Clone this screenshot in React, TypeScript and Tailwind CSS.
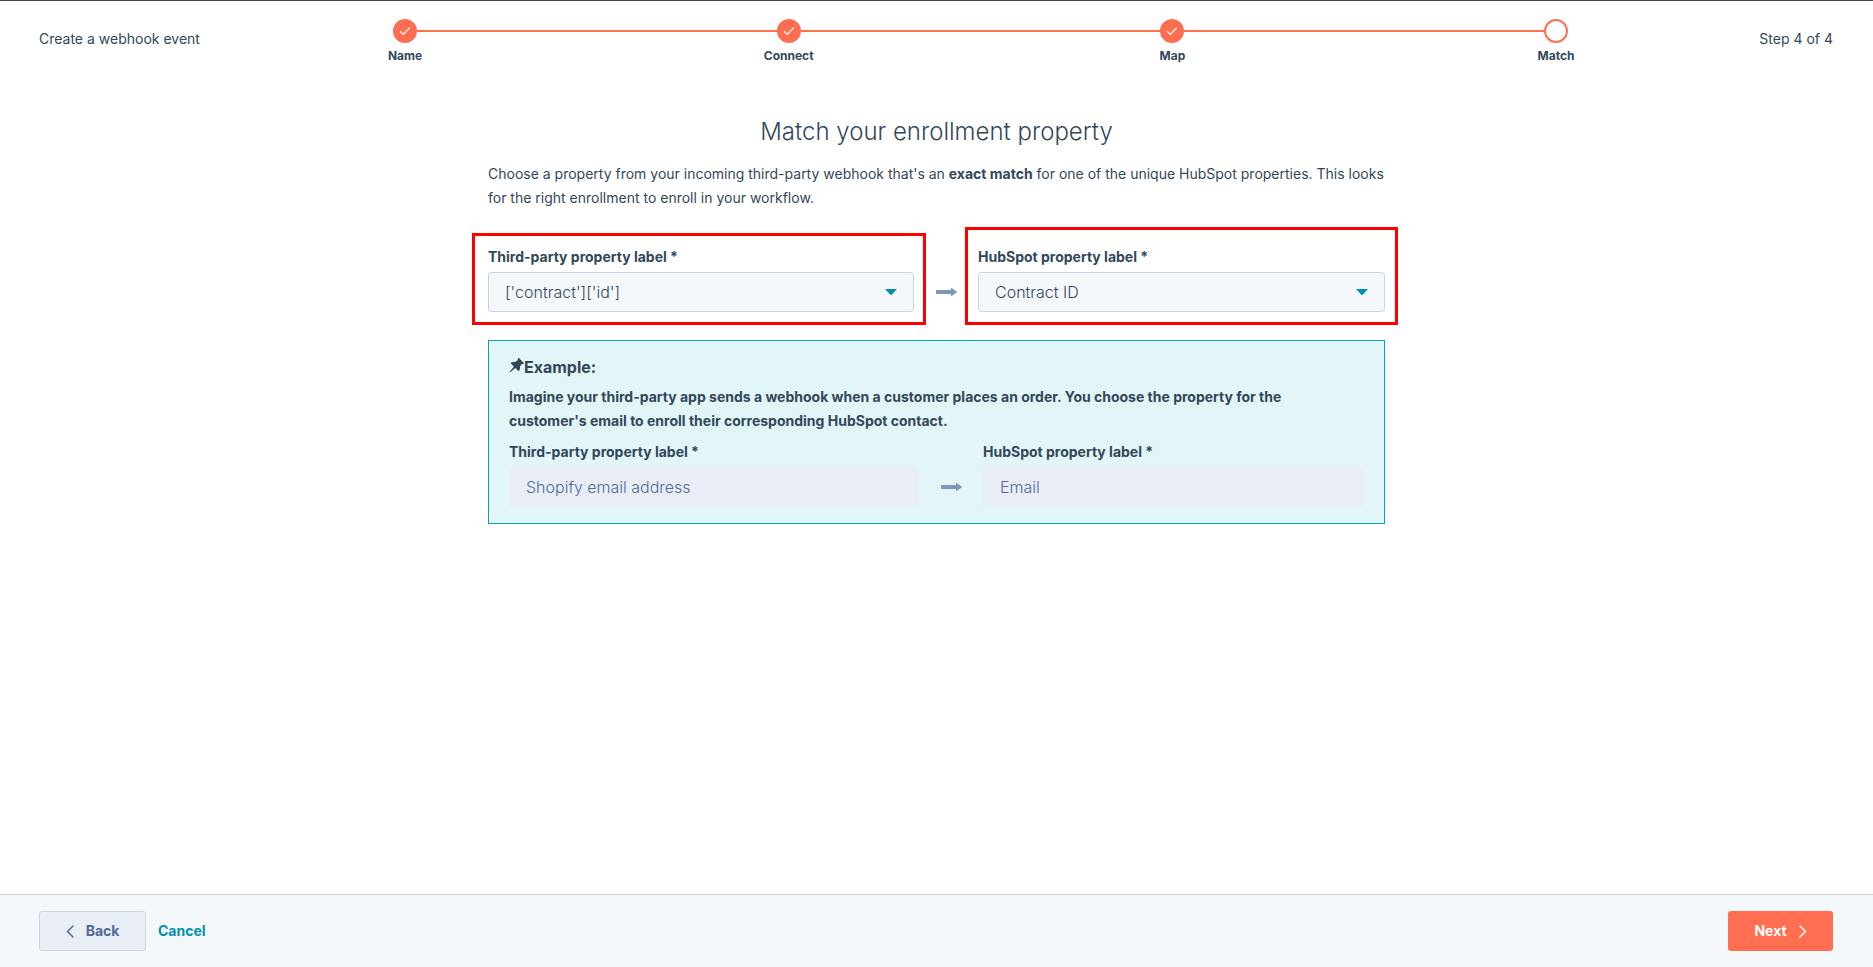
import { useState } from 'react';

const STEPS = ['Name', 'Connect', 'Map', 'Match'];
const CURRENT_STEP = 3;

const THIRD_PARTY_PROPERTIES = ["['contract']['id']"];
const HUBSPOT_PROPERTIES = ['Contract ID'];

function CheckIcon() {
  return (
    <svg width="12" height="10" viewBox="0 0 12 10" fill="none" aria-hidden="true">
      <path d="M1.2 5.2 4.4 8.4 10.8 1.6" stroke="currentColor" strokeWidth="1.3" />
    </svg>
  );
}

function ArrowIcon() {
  return (
    <svg width="21" height="8" viewBox="0 0 21 8" fill="currentColor" aria-hidden="true">
      <path d="M.6 2.1H15V.4c0-.4.3-.5.6-.3l5 3.4c.4.3.4.7 0 1l-5 3.4c-.3.2-.6.1-.6-.3V5.9H.6c-.4 0-.6-.2-.6-.6V2.7c0-.4.2-.6.6-.6Z" />
    </svg>
  );
}

function PinIcon() {
  return (
    <svg width="15" height="15" viewBox="0 0 15 15" fill="currentColor" aria-hidden="true">
      <path d="M9 .3c.3-.4.8-.4 1.2 0l4.4 4.4c.4.4.3.9-.1 1.1-.5.3-1 .3-1.5.2L10.9 8.5c.3 1.5.1 2.9-.6 4.1-.3.5-.8.5-1.2.1L6.3 9.9 1.3 14.3c-.4.3-.9-.1-.6-.6L4.9 8.5 2.1 5.7c-.4-.4-.3-.9.2-1.1 1.2-.6 2.5-.8 3.9-.5L8.9 2c-.2-.6-.2-1.2.1-1.7Z" />
    </svg>
  );
}

function Chevron({ direction }: { direction: 'left' | 'right' }) {
  return (
    <svg width="8" height="13" viewBox="0 0 8 13" fill="none" aria-hidden="true">
      <path
        d={direction === 'left' ? 'M7 1 1.5 6.5 7 12' : 'M1 1 6.5 6.5 1 12'}
        stroke="currentColor"
        strokeWidth="1.5"
        strokeLinecap="round"
        strokeLinejoin="round"
      />
    </svg>
  );
}

function Stepper() {
  return (
    <ol className="flex flex-1 justify-between">
      {STEPS.map((step, index) => (
        <li
          key={step}
          className={index === 0 ? 'flex' : 'flex flex-1'}
          aria-current={index === CURRENT_STEP ? 'step' : undefined}
        >
          {index > 0 && <span className="mt-[11px] h-[2px] flex-1 bg-[#ff6e50]" />}
          <div className="flex w-6 flex-col items-center">
            <span
              className={`flex size-6 items-center justify-center rounded-full border-2 border-[#ff6e50] text-white ${
                index < CURRENT_STEP ? 'bg-[#ff6e50]' : 'bg-white'
              }`}
            >
              {index < CURRENT_STEP && <CheckIcon />}
            </span>
            <span className="mt-[5px] text-xs leading-4 font-bold whitespace-nowrap">{step}</span>
          </div>
        </li>
      ))}
    </ol>
  );
}

type PropertySelectProps = {
  id: string;
  label: string;
  options: string[];
  value: string;
  onChange: (value: string) => void;
  highlight: string;
};

function PropertySelect({ id, label, options, value, onChange, highlight }: PropertySelectProps) {
  return (
    <div className="relative">
      <label htmlFor={id} className="block text-sm leading-6 font-bold">
        {label}
      </label>
      <div className="relative mt-[3px]">
        <select
          id={id}
          value={value}
          onChange={(e) => onChange(e.target.value)}
          className="h-10 w-full appearance-none rounded-[3px] border border-[#cbd6e2] bg-[#f5f8fa] px-4 text-base font-light text-[#33475b]"
        >
          {options.map((option) => (
            <option key={option}>{option}</option>
          ))}
        </select>
        <svg
          className="pointer-events-none absolute top-[17px] right-[17px] text-[#0091ae]"
          width="12"
          height="6"
          viewBox="0 0 12 6"
          fill="currentColor"
          aria-hidden="true"
        >
          <path d="M0 0h12L6.7 5.7c-.4.4-1 .4-1.4 0Z" />
        </svg>
      </div>
      <div className={`pointer-events-none absolute border-[3px] border-[#ff0000] ${highlight}`} />
    </div>
  );
}

function ExampleField({ id, label, value }: { id: string; label: string; value: string }) {
  return (
    <div>
      <label htmlFor={id} className="block text-sm leading-6 font-bold">
        {label}
      </label>
      <input
        id={id}
        type="text"
        value={value}
        disabled
        className="mt-[3px] block h-10 w-full rounded-[3px] bg-[#e9eef6] px-[17px] text-base font-light text-[#506a9a]"
      />
    </div>
  );
}

export default function App() {
  const [thirdParty, setThirdParty] = useState(THIRD_PARTY_PROPERTIES[0]);
  const [hubspot, setHubspot] = useState(HUBSPOT_PROPERTIES[0]);

  return (
    <div className="flex min-h-screen flex-col border-t border-[#3c4a46] bg-white font-[Inter,sans-serif] text-[#33475b]">
      {/* Header */}
      <header className="flex pt-[18px] pr-10 pl-[39px]">
        <p className="w-[354px] pt-2 text-sm leading-6">Create a webhook event</p>
        <Stepper />
        <p className="w-[265px] pt-2 text-right text-sm leading-6">Step 4 of 4</p>
      </header>

      {/* Content */}
      <main className="mx-auto w-full max-w-[897px] flex-1 pt-[52px]">
        <h1 className="text-center text-2xl leading-8 font-light">Match your enrollment property</h1>
        <p className="mt-[14px] text-sm leading-6">
          Choose a property from your incoming third-party webhook that's an{' '}
          <strong className="font-bold">exact match</strong> for one of the unique HubSpot properties. This looks for
          the right enrollment to enroll in your workflow.
        </p>

        <form className="mt-[35px] grid grid-cols-[426fr_64px_407fr]">
          <PropertySelect
            id="third-party-property"
            label="Third-party property label *"
            options={THIRD_PARTY_PROPERTIES}
            value={thirdParty}
            onChange={setThirdParty}
            highlight="-top-3 -right-3 -bottom-[13px] -left-4"
          />
          <div className="flex h-10 items-center justify-center self-end text-[#7c98b6]">
            <ArrowIcon />
          </div>
          <PropertySelect
            id="hubspot-property"
            label="HubSpot property label *"
            options={HUBSPOT_PROPERTIES}
            value={hubspot}
            onChange={setHubspot}
            highlight="-top-[18px] -right-[13px] -bottom-[13px] -left-[13px]"
          />
        </form>

        <section className="mt-7 border border-[#00a4bd] bg-[#e2f6f8] px-5 pt-[14px] pb-4">
          <h2 className="flex text-base leading-6 font-bold">
            <span className="mt-[3px]">
              <PinIcon />
            </span>
            Example:
          </h2>
          <p className="mt-[6px] pr-5 text-sm leading-6 font-bold">
            Imagine your third-party app sends a webhook when a customer places an order. You choose the property for
            the customer's email to enroll their corresponding HubSpot contact.
          </p>
          <div className="mt-[7px] grid grid-cols-[410fr_64px_381fr]">
            <ExampleField id="example-third-party" label="Third-party property label *" value="Shopify email address" />
            <div className="flex h-10 items-center justify-center self-end text-[#7c98b6]">
              <ArrowIcon />
            </div>
            <ExampleField id="example-hubspot" label="HubSpot property label *" value="Email" />
          </div>
        </section>
      </main>

      {/* Footer */}
      <footer className="flex items-center justify-between border-t border-[#cbd6e2] bg-[#f5f8fa] py-4 pr-10 pl-[39px] text-sm leading-6 font-bold">
        <div className="flex items-center gap-3">
          <button
            type="button"
            className="flex h-10 w-[107px] items-center justify-center gap-3 rounded-[3px] border border-[#cbd6e2] bg-[#e9eef6] text-[#506a9a]"
          >
            <Chevron direction="left" />
            Back
          </button>
          <a href="#" className="text-[#0091ae]">
            Cancel
          </a>
        </div>
        <button
          type="button"
          className="flex h-10 w-[105px] items-center justify-center gap-3 rounded-[3px] bg-[#ff6e50] text-white"
        >
          Next
          <Chevron direction="right" />
        </button>
      </footer>
    </div>
  );
}
